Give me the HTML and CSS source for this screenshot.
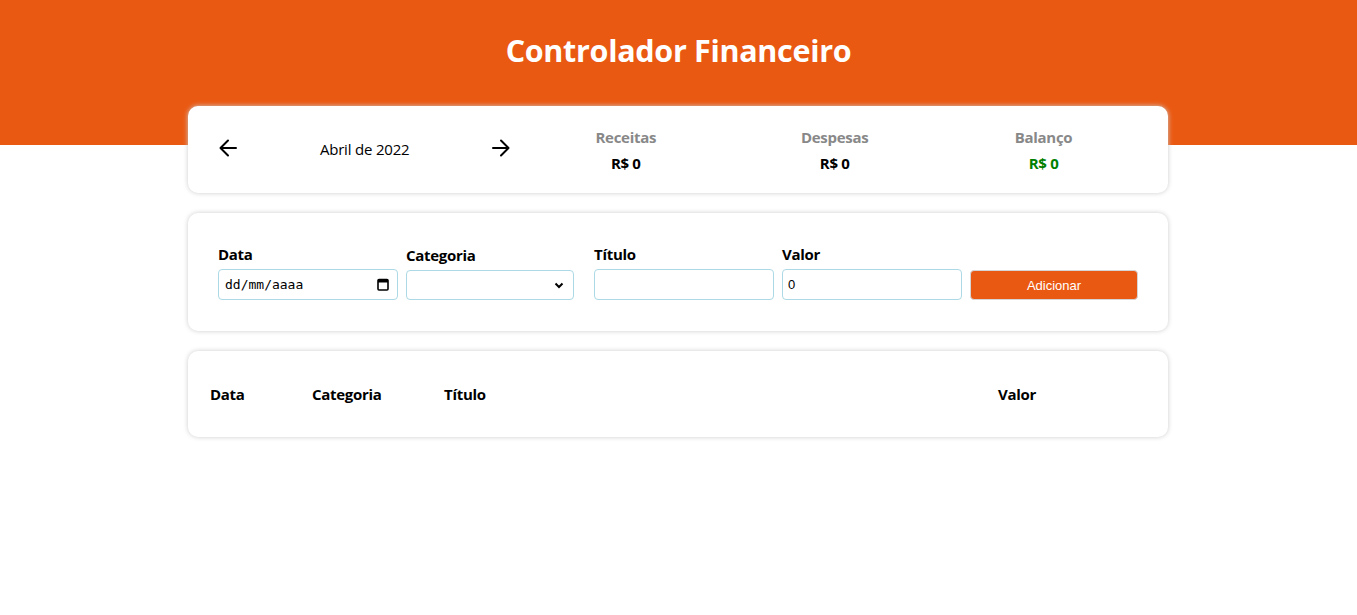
FILE: index.html
```html
<!DOCTYPE html>
<html lang="pt-BR">
<head>
<meta charset="utf-8">
<title>Controlador Financeiro</title>
<link rel="stylesheet" href="styles.css">
</head>
<body>
<header class="header">
  <h1 class="header-title">Controlador Financeiro</h1>
</header>
<main class="body">
  <section class="card info">
    <div class="month">
      <button class="arrow" aria-label="Mês anterior">
        <svg width="20" height="20" viewBox="0 0 20 20"><path d="M18 10H3M10 2.5L2.5 10L10 17.5" fill="none" stroke="#000" stroke-width="2" stroke-linecap="round" stroke-linejoin="round"/></svg>
      </button>
      <div class="month-title">Abril de 2022</div>
      <button class="arrow" aria-label="Próximo mês">
        <svg width="20" height="20" viewBox="0 0 20 20"><path d="M2 10H17M10 2.5L17.5 10L10 17.5" fill="none" stroke="#000" stroke-width="2" stroke-linecap="round" stroke-linejoin="round"/></svg>
      </button>
    </div>
    <div class="resume">
      <div class="resume-item"><div class="resume-title">Receitas</div><div class="resume-value">R$ 0</div></div>
      <div class="resume-item"><div class="resume-title">Despesas</div><div class="resume-value">R$ 0</div></div>
      <div class="resume-item"><div class="resume-title">Balanço</div><div class="resume-value green">R$ 0</div></div>
    </div>
  </section>

  <section class="card form">
    <label class="field w180">
      <span class="field-label">Data</span>
      <span class="input-box">
        <input class="date-input" type="text" placeholder="dd/mm/aaaa">
        <svg class="cal" width="12" height="13" viewBox="0 0 12 13"><rect x="1" y="1.5" width="10" height="10.5" rx="1" fill="none" stroke="#000" stroke-width="1.6"/><rect x="1" y="1.5" width="10" height="3" fill="#000"/></svg>
      </span>
    </label>
    <label class="field w168 gap-right">
      <span class="field-label cat-label">Categoria</span>
      <span class="input-box select-box">
        <select class="select"><option></option></select>
        <svg class="chev" width="10" height="7" viewBox="0 0 10 7"><path d="M1.5 1.5L5 5L8.5 1.5" fill="none" stroke="#000" stroke-width="2"/></svg>
      </span>
    </label>
    <label class="field w180">
      <span class="field-label">Título</span>
      <span class="input-box"><input class="text-input" type="text"></span>
    </label>
    <label class="field w180">
      <span class="field-label">Valor</span>
      <span class="input-box"><input class="text-input" type="text" value="0"></span>
    </label>
    <div class="field w168">
      <span class="field-label">&nbsp;</span>
      <button class="add-btn">Adicionar</button>
    </div>
  </section>

  <section class="card table-card">
    <table class="table">
      <thead>
        <tr>
          <th class="col-date">Data</th>
          <th class="col-cat">Categoria</th>
          <th class="col-title">Título</th>
          <th class="col-value">Valor</th>
        </tr>
      </thead>
    </table>
  </section>
</main>
</body>
</html>
```
FILE: styles.css
```css
* { box-sizing: border-box; }
body {
  margin: 0;
  font-family: "Open Sans", "Noto Sans", sans-serif;
  color: #000;
  background: #fff;
}
.header {
  height: 145px;
  background: #ea5912;
  text-align: center;
  padding-top: 27px;
}
.header-title {
  margin: 0;
  color: #fff;
  font-size: 30.5px;
  line-height: 46px;
  font-weight: 700;
  letter-spacing: -0.3px;
}
.body {
  width: 980px;
  margin: -39px 0 0 calc(50% - 490.5px);
}
.card {
  background: #fff;
  border-radius: 10px;
  box-shadow: 0 0 5px #ccc;
  margin-bottom: 20px;
}
.info {
  display: flex;
  align-items: center;
  height: 87px;
  padding: 0 20px;
}
.month {
  flex: 1;
  display: flex;
  align-items: center;
}
.arrow {
  width: 40px;
  height: 40px;
  border: 0;
  background: none;
  padding: 0;
  display: flex;
  align-items: center;
  justify-content: center;
  margin-top: -4px;
}
.month-title {
  flex: 1;
  text-align: center;
  font-size: 15px;
  letter-spacing: -0.2px;
  margin-top: -2px;
}
.resume {
  flex: 2;
  display: flex;
}
.resume-item {
  flex: 1;
  text-align: center;
  font-weight: 700;
  margin-top: 2px;
}
.resume-title {
  color: #888;
  font-size: 15px;
  line-height: 24px;
  letter-spacing: -0.3px;
}
.resume-value {
  font-size: 15px;
  line-height: 28px;
  letter-spacing: -0.3px;
}
.green { color: #008000; }

.form {
  display: flex;
  align-items: flex-start;
  gap: 8px;
  height: 118px;
  padding: 32px 30px 0;
}
.field {
  display: flex;
  flex-direction: column;
  flex: none;
}
.w180 { width: 180px; }
.w168 { width: 168px; }
.gap-right { margin-right: 12px; }
.field-label {
  font-weight: 700;
  font-size: 15px;
  line-height: 18px;
  height: 18px;
  margin-bottom: 6px;
  letter-spacing: -0.3px;
}
.cat-label { transform: none; margin-top: 1px; margin-bottom: 5px; }
.input-box {
  display: flex;
  align-items: center;
  height: 31px;
  border: 1px solid #add8e6;
  border-radius: 4px;
  background: #fff;
}
.date-input, .text-input, .select {
  flex: 1;
  min-width: 0;
  height: 100%;
  border: 0;
  outline: none;
  background: transparent;
  padding: 0 5px;
}
.date-input {
  font-family: "DejaVu Sans Mono", "Liberation Mono", monospace;
  font-size: 13px;
  padding-left: 6px;
}
.date-input::placeholder { color: #000; }
.cal { margin-right: 8px; }
.text-input {
  font-family: "Liberation Sans", Arial, sans-serif;
  font-size: 13px;
}
.select-box { height: 30px; margin-top: 1px; }
.select {
  appearance: none;
  -webkit-appearance: none;
  font-size: 13px;
}
.chev { margin-right: 9px; }
.add-btn {
  height: 30px;
  margin-top: 1px;
  background: #ea5912;
  color: #fff;
  border: 1px solid #d5d5d5;
  border-radius: 4px;
  font-family: "Liberation Sans", Arial, sans-serif;
  font-size: 13px;
}

.table-card {
  height: 86px;
  padding: 20px 20px;
  display: flex;
  align-items: center;
}
.table {
  width: 100%;
  border-collapse: collapse;
  margin-top: -1px;
}
.table th {
  text-align: left;
  font-weight: 700;
  font-size: 15px;
  letter-spacing: -0.3px;
  padding: 0 0 0 2px;
}
.col-date { width: 102px; }
.col-cat { width: 132px; }
.col-value { width: 152px; }
```
